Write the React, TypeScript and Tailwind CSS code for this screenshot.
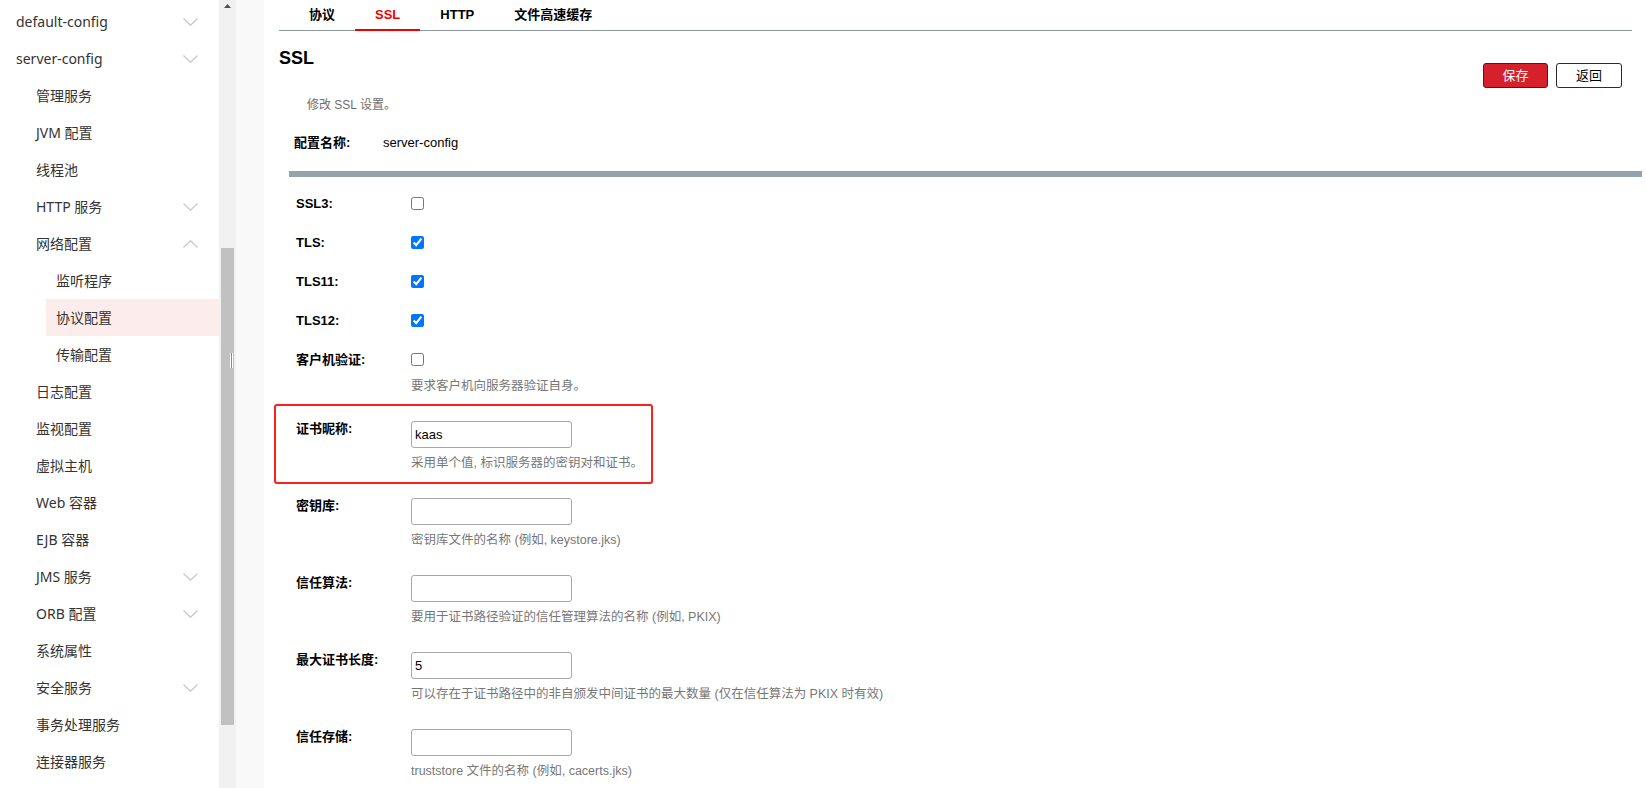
import React from 'react';

type NavItem = {
  label: string;
  level: 0 | 1 | 2;
  chevron?: 'down' | 'up';
  active?: boolean;
};

const navItems: NavItem[] = [
  { label: 'default-config', level: 0, chevron: 'down' },
  { label: 'server-config', level: 0, chevron: 'down' },
  { label: '管理服务', level: 1 },
  { label: 'JVM 配置', level: 1 },
  { label: '线程池', level: 1 },
  { label: 'HTTP 服务', level: 1, chevron: 'down' },
  { label: '网络配置', level: 1, chevron: 'up' },
  { label: '监听程序', level: 2 },
  { label: '协议配置', level: 2, active: true },
  { label: '传输配置', level: 2 },
  { label: '日志配置', level: 1 },
  { label: '监视配置', level: 1 },
  { label: '虚拟主机', level: 1 },
  { label: 'Web 容器', level: 1 },
  { label: 'EJB 容器', level: 1 },
  { label: 'JMS 服务', level: 1, chevron: 'down' },
  { label: 'ORB 配置', level: 1, chevron: 'down' },
  { label: '系统属性', level: 1 },
  { label: '安全服务', level: 1, chevron: 'down' },
  { label: '事务处理服务', level: 1 },
  { label: '连接器服务', level: 1 },
];

const levelClass = {
  0: 'pl-[16px]',
  1: 'pl-[36px]',
  2: 'ml-[46px] pl-[10px]',
};

function Chevron({ dir }: { dir: 'down' | 'up' }) {
  return (
    <svg width="15" height="8" viewBox="0 0 15 8" fill="none">
      <path
        d={dir === 'down' ? 'M0.5 0.5L7.5 7.3L14.5 0.5' : 'M0.5 7.5L7.5 0.7L14.5 7.5'}
        stroke="#c8c8c8"
        strokeWidth={1.2}
      />
    </svg>
  );
}

function Sidebar() {
  return (
    <aside className="w-[219px] shrink-0 h-full bg-white pt-[3px] font-['Noto_Sans','Noto_Sans_CJK_SC',sans-serif] text-[14px] text-[#333]">
      {navItems.map((item) => (
        <div
          key={item.label}
          className={`h-[37px] flex items-center justify-between pr-[21px] ${levelClass[item.level]} ${
            item.active ? 'bg-[#fdecec]' : ''
          }`}
        >
          <span>{item.label}</span>
          {item.chevron && <Chevron dir={item.chevron} />}
        </div>
      ))}
    </aside>
  );
}

function Scrollbar() {
  return (
    <div className="w-[17px] shrink-0 h-full bg-[#f1f1f1] flex flex-col">
      <div className="h-[17px] flex justify-center pt-[4px]">
        <svg width="7" height="4" viewBox="0 0 7 4">
          <polygon points="0,4 3.5,0 7,4" fill="#505050" />
        </svg>
      </div>
      <div className="mt-[231px] mx-[2px] h-[477px] bg-[#c1c1c1]">
        <div className="ml-[9px] mt-[105px] flex">
          <div className="w-[1px] h-[15px] bg-white" />
          <div className="w-[1px] h-[15px] bg-[#8a8a8a]" />
          <div className="w-[1px] h-[15px] bg-white" />
        </div>
      </div>
    </div>
  );
}

function Tabs() {
  const tabs = ['协议', 'SSL', 'HTTP', '文件高速缓存'];
  return (
    <div className="ml-[5px] mr-[14px] h-[31px] border-b border-[#8b99a1] flex items-start pl-[10px]">
      {tabs.map((t) => (
        <div
          key={t}
          className={`h-[31px] px-[20px] flex items-center text-[13px] font-bold border-b-2 ${
            t === 'SSL' ? 'text-[#f20000] border-[#f20000]' : 'text-black border-transparent'
          }`}
        >
          {t}
        </div>
      ))}
    </div>
  );
}

function CheckRow({ label, checked }: { label: string; checked?: boolean }) {
  return (
    <div className="h-[39px] flex items-center pl-[22px]">
      <span className="w-[115px] shrink-0 text-[13px] font-bold text-black">{label}</span>
      <input type="checkbox" defaultChecked={checked} className="m-0 w-[13px] h-[13px]" />
    </div>
  );
}

function TextRow({ label, value, help }: { label: string; value?: string; help: string }) {
  return (
    <div className="flex items-start">
      <span className="w-[115px] shrink-0 text-[13px] leading-[15px] font-bold text-black">{label}</span>
      <div>
        <input
          type="text"
          defaultValue={value}
          className="block w-[161px] h-[27px] px-[3px] border border-[#a8a8a8] rounded-[3px] text-[13px] text-black outline-none"
        />
        <p className="mt-[7px] text-[12.5px] leading-[16px] text-[#777] whitespace-nowrap">{help}</p>
      </div>
    </div>
  );
}

export default function App() {
  return (
    <div className="w-full h-[788px] flex overflow-hidden bg-white">
      <Sidebar />
      <Scrollbar />
      <div className="w-[28px] shrink-0 h-full bg-[#f9f9f9]" />

      <main className="flex-1 h-full bg-white pl-[10px] overflow-hidden font-['Liberation_Sans','Noto_Sans_CJK_SC',sans-serif] text-black">
        <Tabs />

        {/* Header */}
        <div className="ml-[5px] mr-[24px] flex justify-between items-start">
          <div>
            <h1 className="mt-[16px] text-[18px] leading-[22px] font-bold">SSL</h1>
            <p className="mt-[28px] pl-[28px] text-[12px] leading-[16px] text-[#6e6e6e]">修改 SSL 设置。</p>
            <div className="mt-[22px] pl-[15px] flex text-[13px] leading-[16px]">
              <span className="w-[89px] font-bold">配置名称:</span>
              <span>server-config</span>
            </div>
          </div>
          <div className="mt-[32px] flex gap-[8px]">
            <button className="w-[65px] h-[25px] rounded-[3px] border border-[#2b2b2b] bg-[#d6202b] text-white text-[13px]">
              保存
            </button>
            <button className="w-[66px] h-[25px] rounded-[3px] border border-[#2b2b2b] bg-white text-black text-[13px]">
              返回
            </button>
          </div>
        </div>

        <div className="mt-[20px] ml-[15px] mr-[4px] h-[6px] bg-[#95a3aa]" />

        {/* Form */}
        <div className="mt-[7px]">
          <CheckRow label="SSL3:" />
          <CheckRow label="TLS:" checked />
          <CheckRow label="TLS11:" checked />
          <CheckRow label="TLS12:" checked />

          <div className="flex pl-[22px]">
            <span className="w-[115px] shrink-0 h-[39px] flex items-center text-[13px] font-bold">客户机验证:</span>
            <div>
              <div className="h-[39px] flex items-center">
                <input type="checkbox" className="m-0 w-[13px] h-[13px]" />
              </div>
              <p className="-mt-[1px] text-[12.5px] leading-[16px] text-[#777]">要求客户机向服务器验证自身。</p>
            </div>
          </div>

          <div className="mt-[10px] w-[379px] border-2 border-[#ff1f1f] rounded-[3px] pl-[20px] pt-[15px] pb-[11px]">
            <TextRow label="证书昵称:" value="kaas" help="采用单个值, 标识服务器的密钥对和证书。" />
          </div>

          <div className="mt-[14px] pl-[22px]">
            <TextRow label="密钥库:" help="密钥库文件的名称 (例如, keystore.jks)" />
          </div>
          <div className="mt-[27px] pl-[22px]">
            <TextRow label="信任算法:" help="要用于证书路径验证的信任管理算法的名称 (例如, PKIX)" />
          </div>
          <div className="mt-[27px] pl-[22px]">
            <TextRow
              label="最大证书长度:"
              value="5"
              help="可以存在于证书路径中的非自颁发中间证书的最大数量 (仅在信任算法为 PKIX 时有效)"
            />
          </div>
          <div className="mt-[27px] pl-[22px]">
            <TextRow label="信任存储:" help="truststore 文件的名称 (例如, cacerts.jks)" />
          </div>
        </div>
      </main>
    </div>
  );
}
